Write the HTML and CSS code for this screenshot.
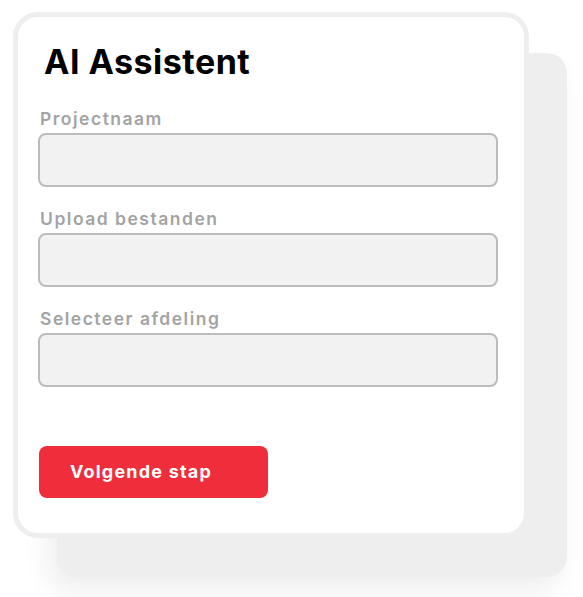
FILE: index.html
```html
<!DOCTYPE html>
<html lang="nl">
<head>
<meta charset="utf-8">
<title>AI Assistent</title>
<link rel="stylesheet" href="styles.css">
</head>
<body>
<div class="stage">
  <div class="back-card"></div>
  <div class="card">
    <h1 class="title">AI Assistent</h1>
    <div class="field">
      <label class="label">Projectnaam</label>
      <div class="input"></div>
    </div>
    <div class="field">
      <label class="label">Upload bestanden</label>
      <div class="input"></div>
    </div>
    <div class="field">
      <label class="label">Selecteer afdeling</label>
      <div class="input"></div>
    </div>
    <button class="btn">Volgende stap</button>
  </div>
</div>
</body>
</html>
```
FILE: styles.css
```css
html, body {
  margin: 0;
  padding: 0;
  background: #ffffff;
}
body {
  width: 583px;
  height: 597px;
  overflow: hidden;
  font-family: "Inter", "Open Sans", sans-serif;
}
.stage {
  display: grid;
  padding: 12px 0 0 13px;
}
.back-card {
  grid-area: 1 / 1;
  margin: 41px 0 0 44px;
  width: 510px;
  height: 524px;
  background: #eeeeee;
  border-radius: 20px;
  box-shadow: -8px 14px 28px rgba(0, 0, 0, 0.07);
}
.card {
  grid-area: 1 / 1;
  position: relative;
  z-index: 1;
  box-sizing: border-box;
  width: 516px;
  height: 526px;
  border: 5px solid #eeeeee;
  border-radius: 25px;
  background: #ffffff;
  padding: 0 25px 0 20px;
  display: flex;
  flex-direction: column;
  align-items: flex-start;
}
.title {
  margin: 25px 0 0 6px;
  font-size: 34px;
  line-height: 40px;
  font-weight: 700;
  color: #000000;
  letter-spacing: 0.5px;
}
.field {
  display: flex;
  flex-direction: column;
  gap: 4px;
  margin-top: 27px;
}
.field + .field {
  margin-top: 22px;
}
.label {
  margin-left: 2px;
  font-size: 17.5px;
  line-height: 20px;
  font-weight: 600;
  color: #a3a3a3;
  letter-spacing: 1.5px;
}
.input {
  box-sizing: border-box;
  height: 54px;
  width: 460px;
  border: 2.5px solid #bcbcbc;
  border-radius: 8px;
  background: #f2f2f2;
}
.btn {
  margin-top: 59px;
  margin-left: 1px;
  width: 229px;
  height: 52px;
  border: none;
  border-radius: 8px;
  background: #f02d3a;
  color: #ffffff;
  font-family: inherit;
  font-size: 18px;
  font-weight: 700;
  letter-spacing: 1.2px;
  text-align: left;
  padding: 0 0 2px 31px;
  cursor: pointer;
}
```
